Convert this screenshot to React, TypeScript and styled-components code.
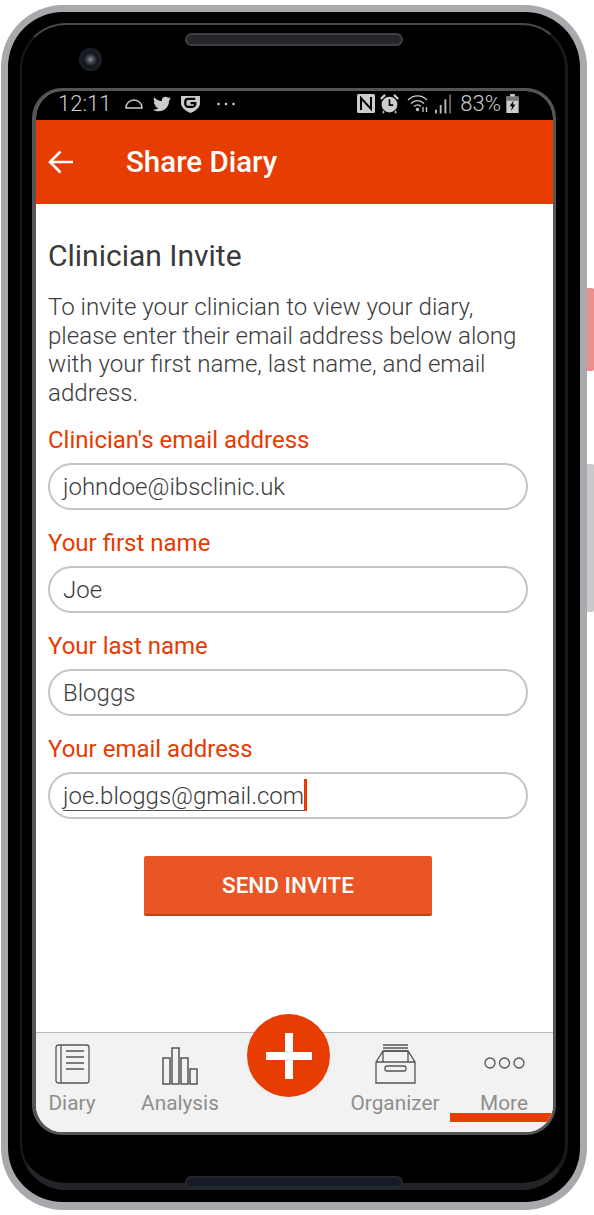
import styled, { createGlobalStyle } from "styled-components";
import { FaTwitter } from "react-icons/fa";

const GlobalStyle = createGlobalStyle`
    * {
        box-sizing: border-box;
    }
    html,
    body {
        margin: 0;
        background: #fff;
        font-family: Roboto, "Liberation Sans", sans-serif;
    }
`;

const Page = styled.div`
    position: relative;
    width: 594px;
    height: 1215px;
    padding: 5px 7px 5px 1px;
    overflow: hidden;
`;

// 기기 외곽
const Shell = styled.div`
    position: relative;
    height: 1205px;
    padding: 11px 12px 12px;
    background: #000;
    border: 7px solid #a7a9ad;
    border-bottom-width: 8px;
    border-radius: 62px;
`;
const SideButton = styled.div<{ $top: number; $height: number; $color: string }>`
    position: absolute;
    right: 0;
    top: ${(p) => p.$top}px;
    width: 7px;
    height: ${(p) => p.$height}px;
    background: ${(p) => p.$color};
    border-radius: 0 2px 2px 0;
`;
const Bezel = styled.div`
    position: relative;
    height: 100%;
    padding: 8px 9px 48px 10px;
    border: solid #17181a;
    border-width: 2px 3px 7px 2px;
    border-top-color: #48494d;
    border-bottom-color: #232428;
    border-radius: 46px;
    background: #000;
`;
const Speaker = styled.div<{ $bottom?: boolean }>`
    position: ${(p) => (p.$bottom ? "absolute" : "static")};
    left: 163px;
    bottom: -5px;
    width: 218px;
    height: ${(p) => (p.$bottom ? 12 : 13)}px;
    margin-left: ${(p) => (p.$bottom ? 0 : 153)}px;
    margin-bottom: ${(p) => (p.$bottom ? 0 : 42)}px;
    background: ${(p) => (p.$bottom ? "#151b28" : "#24262b")};
    border: 2px solid ${(p) => (p.$bottom ? "#24262b" : "#3c3e43")};
    border-radius: 7px;
`;
const Camera = styled.div`
    position: absolute;
    left: 57px;
    top: 23px;
    width: 23px;
    height: 23px;
    border-radius: 50%;
    background: radial-gradient(circle at 50% 50%, #8b8d99 0, #41434f 22%, #14161d 42%, #262a36 100%);
`;

// 화면
const Screen = styled.div`
    position: relative;
    display: flex;
    flex-direction: column;
    height: 1047px;
    border: 3px solid #555;
    border-left-width: 4px;
    border-radius: 30px;
    overflow: hidden;
    background: #fff;
`;
const StatusBar = styled.div`
    display: flex;
    align-items: center;
    height: 29px;
    padding: 0 0 4px 22px;
    background: #000;
    color: #ccc;
    font-size: 22px;
    font-weight: 300;
`;
const StatusLeft = styled.div`
    display: flex;
    align-items: center;
    gap: 10px;
`;
const StatusRight = styled.div`
    display: flex;
    align-items: center;
    gap: 5px;
    margin-left: auto;
    margin-right: 34px;
`;
const Time = styled.span`
    width: 57px;
`;
const AppBar = styled.header`
    display: flex;
    align-items: center;
    gap: 52px;
    height: 84px;
    padding: 0 0 0 12px;
    background: #e73c02;
    color: #fff;
`;
const BarTitle = styled.h1`
    margin: 0;
    font-size: 29.5px;
    font-weight: 500;
`;

// 입력 폼
const Form = styled.main`
    flex: 1;
    padding: 34px 25px 0 12px;
`;
const Title = styled.h2`
    margin: 0 0 19px;
    font-size: 30px;
    line-height: 36px;
    font-weight: 400;
    color: #3a3a3a;
`;
const Intro = styled.p`
    margin: 0 0 18px;
    font-size: 24.1px;
    line-height: 28.5px;
    font-weight: 300;
    color: #3c3c3c;
`;
const Field = styled.div`
    margin-bottom: 18px;
`;
const Label = styled.div`
    margin: 0 0 8px;
    font-size: 24px;
    line-height: 30px;
    color: #e63b02;
`;
const InputBox = styled.div`
    display: flex;
    align-items: center;
    height: 47px;
    padding: 1px 13px 0;
    border: 2px solid #c4c4c4;
    border-radius: 24px;
    font-size: 24px;
    font-weight: 300;
    color: #3c3c3c;
`;
const Composing = styled.span`
    line-height: 28px;
    border-bottom: 1px solid #555;
    margin-bottom: -1px;
`;
const Caret = styled.span`
    width: 3px;
    height: 32px;
    margin-top: -2px;
    background: #e73c02;
`;
const SendButton = styled.button`
    display: block;
    width: 288px;
    height: 60px;
    margin: 37px auto 0;
    padding: 0;
    border: 0;
    border-bottom: 2px solid #b5481f;
    border-radius: 2px;
    background: #ea5525;
    color: #fff;
    font-family: inherit;
    font-size: 22.5px;
    font-weight: 500;
`;

// 하단 탭
const TabBar = styled.nav`
    display: grid;
    grid-template-columns: 72px 144px 88px 110px 103px;
    height: 100px;
    border-top: 1px solid #bbb;
    background: #f2f2f2;
`;
const Tab = styled.div<{ $active?: boolean }>`
    position: relative;
    display: flex;
    flex-direction: column;
    align-items: center;
    padding-left: ${(p) => (p.$active ? 5 : 0)}px;
    color: #8e8e8e;
    font-size: 20.8px;

    ${(p) =>
        p.$active &&
        `&::after {
            content: "";
            position: absolute;
            left: 0;
            right: 0;
            top: 80px;
            height: 9px;
            background: #e73c02;
        }`}
`;
const TabIcon = styled.div`
    display: flex;
    align-items: flex-end;
    justify-content: center;
    height: 51px;
`;
const TabLabel = styled.span`
    line-height: 30px;
    margin-top: 4px;
`;
const Fab = styled.button`
    position: absolute;
    left: 211px;
    top: 923px;
    width: 83px;
    height: 83px;
    padding: 0;
    border: 0;
    border-radius: 50%;
    background: #e73c02;
    display: flex;
    align-items: center;
    justify-content: center;
`;

const CellSignal = () => (
    <svg width="17" height="24" viewBox="0 0 18 24" fill="#bbb">
        <rect x="0" y="18" width="2" height="4" />
        <rect x="5" y="13" width="2" height="9" />
        <rect x="10" y="7" width="2" height="15" />
        <rect x="15" y="2" width="2" height="20" fill="#666" />
    </svg>
);

const App = () => {
    return (
        <>
            <GlobalStyle />
            <Page>
                <SideButton $top={288} $height={83} $color="#ec8f8c" />
                <SideButton $top={464} $height={148} $color="#c8c9cb" />
                <Shell>
                    <Bezel>
                        <Speaker />
                        <Camera />
                        <Screen>
                            <StatusBar>
                                <StatusLeft>
                                    <Time>12:11</Time>
                                    <svg width="18" height="10" viewBox="0 0 18 10" fill="none" stroke="#ccc" strokeWidth="1.4">
                                        <path d="M1 9h16c0-4.500-3.500-8-8-8s-8 3.500-8 8z" />
                                    </svg>
                                    <FaTwitter size={18} color="#ccc" />
                                    <svg width="19" height="18" viewBox="0 0 20 19">
                                        <path d="M0 1h20v8c0 4-5 8-10 10C5 17 0 13 0 9z" fill="#ccc" />
                                        <path d="M15 4H7.500a3 3 0 0 0-3 3v2.500a3 3 0 0 0 3 3H12a3 3 0 0 0 3-3V8.500h-5" fill="none" stroke="#000" strokeWidth="2.400" />
                                    </svg>
                                    <svg width="18" height="6" viewBox="0 0 18 6" fill="#ccc" style={{ marginLeft: 7 }}>
                                        <circle cx="1.500" cy="3" r="1.300" />
                                        <circle cx="9" cy="3" r="1.300" />
                                        <circle cx="16.500" cy="3" r="1.300" />
                                    </svg>
                                </StatusLeft>
                                <StatusRight>
                                    <svg width="18" height="19" viewBox="0 0 18 19" style={{ marginRight: -1 }}>
                                        <rect width="18" height="19" rx="1.500" fill="#ccc" />
                                        <path d="M4 16V4l10 11V3" fill="none" stroke="#000" strokeWidth="2" />
                                    </svg>
                                    <svg width="21" height="21" viewBox="0 0 20 20" fill="#ccc">
                                        <circle cx="10" cy="11" r="7.500" />
                                        <path d="M1 5l4-4 1.500 1.500-4 4zM19 5l-4-4-1.500 1.500 4 4zM3.500 16.500l2 1.500-2 2zM16.500 16.500l-2 1.500 2 2z" />
                                        <path d="M10 6v5.500h3.500" fill="none" stroke="#000" strokeWidth="1.600" />
                                    </svg>
                                    <svg width="23" height="19" viewBox="0 0 23 19" fill="none" stroke="#ccc" strokeWidth="1.300" style={{ marginLeft: 2 }}>
                                        <path d="M1 6c5.500-5.500 13.500-5.500 19 0M4 9.500c3.800-3.800 9.200-3.800 13 0M7 12.500c2.200-2.200 5.200-2.200 7 0" />
                                        <circle cx="10.500" cy="15.500" r="1" fill="#ccc" />
                                        <path d="M16 13v5M19.500 18v-5" />
                                    </svg>
                                    <CellSignal />
                                    <span style={{ marginLeft: 3 }}>83%</span>
                                    <svg width="13" height="19" viewBox="0 0 13 20">
                                        <path d="M4 0h5v2.500h4V20H0V2.500h4z" fill="#ccc" />
                                        <path d="M0 2.500h13V7H0z" fill="#777" />
                                        <path d="M7.500 7L3.500 13h2.500l-1 5 4.500-7H7z" fill="#000" />
                                    </svg>
                                </StatusRight>
                            </StatusBar>
                            <AppBar>
                                <svg width="26" height="24" viewBox="0 0 26 24" fill="none" stroke="#fff" strokeWidth="2.600">
                                    <path d="M25 12H2M12.500 1.500L2 12l10.500 10.500" />
                                </svg>
                                <BarTitle>Share Diary</BarTitle>
                            </AppBar>
                            <Form>
                                <Title>Clinician Invite</Title>
                                <Intro>
                                    To invite your clinician to view your diary,
                                    please enter their email address below along
                                    with your first name, last name, and email
                                    address.
                                </Intro>
                                <Field>
                                    <Label>Clinician's email address</Label>
                                    <InputBox>johndoe@ibsclinic.uk</InputBox>
                                </Field>
                                <Field>
                                    <Label>Your first name</Label>
                                    <InputBox>Joe</InputBox>
                                </Field>
                                <Field>
                                    <Label>Your last name</Label>
                                    <InputBox>Bloggs</InputBox>
                                </Field>
                                <Field>
                                    <Label>Your email address</Label>
                                    <InputBox>
                                        <Composing>joe.bloggs@gmail.com</Composing>
                                        <Caret />
                                    </InputBox>
                                </Field>
                                <SendButton>SEND INVITE</SendButton>
                            </Form>
                            <TabBar>
                                <Tab>
                                    <TabIcon>
                                        <svg width="35" height="40" viewBox="0 0 35 40" fill="none" stroke="#555" strokeWidth="1.300">
                                            <rect x="1" y="1" width="33" height="38" rx="2.500" />
                                            <path d="M6 1v38M11 7h18M11 13h18M11 19h18M11 25h18" />
                                        </svg>
                                    </TabIcon>
                                    <TabLabel>Diary</TabLabel>
                                </Tab>
                                <Tab>
                                    <TabIcon>
                                        <svg width="36" height="38" viewBox="0 0 36 38" fill="none" stroke="#555" strokeWidth="1.500" style={{ marginBottom: -1 }}>
                                            <rect x="1" y="11" width="7" height="26" />
                                            <rect x="10" y="1" width="7" height="36" />
                                            <rect x="19" y="11" width="7" height="26" />
                                            <rect x="28" y="22" width="7" height="15" />
                                        </svg>
                                    </TabIcon>
                                    <TabLabel>Analysis</TabLabel>
                                </Tab>
                                <div />
                                <Tab>
                                    <TabIcon>
                                        <svg width="41" height="40" viewBox="0 0 41 40" fill="none" stroke="#555" strokeWidth="1.300">
                                            <path d="M8 1h25M8 4h25M8 7h25" />
                                            <path d="M1 18l7-11h25l7 11v21H1zM1 18h39M8 7v11M33 7v11" />
                                            <rect x="10" y="22" width="21" height="5" rx="2" />
                                        </svg>
                                    </TabIcon>
                                    <TabLabel>Organizer</TabLabel>
                                </Tab>
                                <Tab $active>
                                    <TabIcon>
                                        <svg width="41" height="12" viewBox="0 0 41 12" fill="none" stroke="#555" strokeWidth="1.300" style={{ marginBottom: 15 }}>
                                            <circle cx="6" cy="6" r="5" />
                                            <circle cx="20.500" cy="6" r="5" />
                                            <circle cx="35" cy="6" r="5" />
                                        </svg>
                                    </TabIcon>
                                    <TabLabel>More</TabLabel>
                                </Tab>
                            </TabBar>
                            <Fab>
                                <svg width="48" height="48" viewBox="0 0 48 48" fill="#fff">
                                    <rect x="20" y="1" width="8" height="46" />
                                    <rect x="1" y="20" width="46" height="8" />
                                </svg>
                            </Fab>
                        </Screen>
                        <Speaker $bottom />
                    </Bezel>
                </Shell>
            </Page>
        </>
    );
};

export default App;
